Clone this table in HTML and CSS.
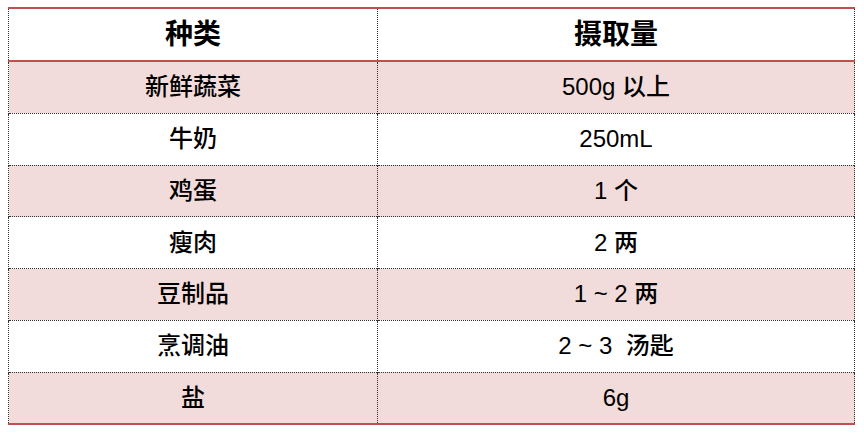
FILE: index.html
```html
<!DOCTYPE html>
<html lang="zh">
<head>
<meta charset="utf-8">
<link rel="stylesheet" href="styles.css">
</head>
<body>
<table class="intake">
  <thead>
    <tr><th class="c1">种类</th><th class="c2">摄取量</th></tr>
  </thead>
  <tbody>
    <tr class="pink"><td>新鲜蔬菜</td><td>500g 以上</td></tr>
    <tr><td>牛奶</td><td>250mL</td></tr>
    <tr class="pink"><td>鸡蛋</td><td>1 个</td></tr>
    <tr><td>瘦肉</td><td>2 两</td></tr>
    <tr class="pink"><td>豆制品</td><td>1 ~ 2 两</td></tr>
    <tr><td>烹调油</td><td>2 ~ 3&nbsp; 汤匙</td></tr>
    <tr class="pink"><td>盐</td><td>6g</td></tr>
  </tbody>
</table>
</body>
</html>
```
FILE: styles.css
```css
html, body {
  margin: 0;
  padding: 0;
  background: #ffffff;
}
body {
  padding: 7px 0 0 8px;
}
.intake {
  border-collapse: collapse;
  width: 847px;
  font-family: "Liberation Sans", "Noto Sans CJK SC", sans-serif;
  color: #000;
  border-top: 2px solid #c0504d;
  border-bottom: 2px solid #c0504d;
  border-left: 1px dotted #333;
  border-right: 1px dotted #333;
}
.intake th, .intake td {
  text-align: center;
  padding: 0;
  line-height: 28px;
  border-left: 1px dotted #333;
  border-right: 1px dotted #333;
}
.intake th {
  height: 51px;
  font-size: 28px;
  font-weight: bold;
  border-bottom: 2px solid #c0504d;
}
.intake td {
  height: 50.75px;
  font-size: 24px;
  font-weight: 500;
  border-top: 1px dotted #333;
}
.intake tbody tr:first-child td {
  border-top: none;
}
.c1 { width: 368px; }
.pink td {
  background: #f2dcdb;
}
```
